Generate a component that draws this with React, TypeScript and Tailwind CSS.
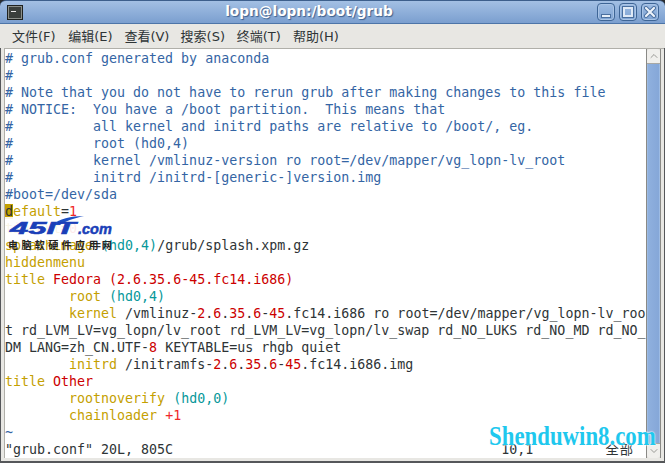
import { ChevronDown, ChevronUp } from "lucide-react";

const Y = "text-[#c4a000]";
const R = "text-[#cc0000]";
const L = "text-[#ef2929]";
const C = "text-[#06989a]";
const B = "text-[#3465a4]";
const K = "text-[#2e3436]";

type Seg = [string, string];

const rows: Seg[][] = [
  [[B, "# grub.conf generated by anaconda"]],
  [[B, "#"]],
  [[B, "# Note that you do not have to rerun grub after making changes to this file"]],
  [[B, "# NOTICE:  You have a /boot partition.  This means that"]],
  [[B, "#          all kernel and initrd paths are relative to /boot/, eg."]],
  [[B, "#          root (hd0,4)"]],
  [[B, "#          kernel /vmlinuz-version ro root=/dev/mapper/vg_lopn-lv_root"]],
  [[B, "#          initrd /initrd-[generic-]version.img"]],
  [[B, "#boot=/dev/sda"]],
  [[Y, "default"], [K, "="], [L, "1"]],
  [[Y, "timeout"], [K, "="], [L, "0"]],
  [[Y, "splashimage"], [K, "="], [C, "(hd0,4)"], [K, "/grub/splash.xpm.gz"]],
  [[Y, "hiddenmenu"]],
  [[Y, "title "], [R, "Fedora (2.6.35.6-45.fc14.i686)"]],
  [[K, "        "], [Y, "root "], [C, "(hd0,4)"]],
  [
    [K, "        "],
    [Y, "kernel "],
    [K, "/vmlinuz-"],
    [R, "2"],
    [K, "."],
    [R, "6"],
    [K, "."],
    [R, "35"],
    [K, "."],
    [R, "6"],
    [K, "-"],
    [R, "45"],
    [K, ".fc14.i686 ro root=/dev/mapper/vg_lopn-lv_roo"],
  ],
  [[K, "t rd_LVM_LV=vg_lopn/lv_root rd_LVM_LV=vg_lopn/lv_swap rd_NO_LUKS rd_NO_MD rd_NO_"]],
  [[K, "DM LANG=zh_CN.UTF-"], [R, "8"], [K, " KEYTABLE=us rhgb quiet"]],
  [
    [K, "        "],
    [Y, "initrd "],
    [K, "/initramfs-"],
    [R, "2"],
    [K, "."],
    [R, "6"],
    [K, "."],
    [R, "35"],
    [K, "."],
    [R, "6"],
    [K, "-"],
    [R, "45"],
    [K, ".fc14.i686.img"],
  ],
  [[Y, "title "], [R, "Other"]],
  [[K, "        "], [Y, "rootnoverify "], [C, "(hd0,0)"]],
  [[K, "        "], [Y, "chainloader "], [L, "+1"]],
  [[B, "~"]],
];

const menus = ["文件(F)", "编辑(E)", "查看(V)", "搜索(S)", "终端(T)", "帮助(H)"];

function WinButton({ children }: { children: React.ReactNode }) {
  return (
    <div className="w-[18px] h-[18px] rounded-[4px] border border-[#3e6596] bg-gradient-to-b from-[#9dbbe2] to-[#7fa3d3] flex items-center justify-center shadow-[inset_0_0_0_1px_#a9c4e6]">
      {children}
    </div>
  );
}

export default function App() {
  return (
    <div className="w-[665px] h-[463px] overflow-hidden relative bg-[#2a2d30] flex flex-col font-['DejaVu_Sans','Noto_Sans_CJK_SC',sans-serif]">
      {/* Title bar */}
      <div className="h-[24px] shrink-0 flex items-center pl-[7px] pr-[6px] rounded-t-[6px] border-t border-[#3d5f8c] border-b border-b-[#4d75a8] bg-gradient-to-b from-[#a3c0e4] to-[#7b9fcf]">
        <div className="w-[16px] h-[15px] bg-[#3a3f3c] border border-[#1f2220] shadow-[inset_0_0_0_1px_#8b8f8a] flex items-start p-[3px]">
          <span className="block w-[5px] h-[3px] border-b border-[#e8e8e8]" />
        </div>
        <div className="flex-1 text-center text-white font-bold text-[13.7px] leading-none [text-shadow:1px_1px_1px_#3d5f8c] pr-[2px]">
          lopn@lopn:/boot/grub
        </div>
        <div className="flex gap-[4px]">
          <WinButton>
            <span className="block w-[10px] h-[4px] bg-[#e6eef8] border border-[#4a6f9f] mt-[8px]" />
          </WinButton>
          <WinButton>
            <span className="block w-[10px] h-[10px] border-2 border-[#dfe9f6] outline outline-1 outline-[#4a6f9f]" />
          </WinButton>
          <WinButton>
            <svg width="12" height="12" viewBox="0 0 12 12">
              <path d="M2 2 L10 10 M10 2 L2 10" stroke="#4a6f9f" strokeWidth="4" strokeLinecap="round" />
              <path d="M2 2 L10 10 M10 2 L2 10" stroke="#eef3fa" strokeWidth="2.2" strokeLinecap="round" />
            </svg>
          </WinButton>
        </div>
      </div>

      {/* Menu bar */}
      <div className="h-[24px] shrink-0 flex items-center pl-[12px] gap-[14px] text-[13px] leading-none text-[#2e3436] bg-[#e8e7e3]">
        {menus.map((m) => (
          <span key={m} className="w-[42.2px] whitespace-nowrap">
            {m}
          </span>
        ))}
      </div>

      {/* Terminal area */}
      <div className="flex-1 min-h-0 flex pl-[3px] pb-[3px] bg-[#e8e7e3] border-x border-b-2 border-[#55575a] border-t-0">
        <div className="flex-1 min-w-0 flex border-t border-l border-[#b0afa9] bg-white">
          <div className="relative flex-1 min-w-0 pt-[1px] overflow-hidden font-['DejaVu_Sans_Mono','Noto_Sans_CJK_SC',monospace] text-[13.3px] leading-[17px]">
            {rows.map((row, i) => (
              <div key={i} className="h-[17px] whitespace-pre">
                {i === 9 ? <span className="bg-[#c4a000] text-[#2e3436]">d</span> : null}
                {row.map(([cls, text], j) => (
                  <span key={j} className={cls}>
                    {i === 9 && j === 0 ? text.slice(1) : text}
                  </span>
                ))}
              </div>
            ))}
            <div className="h-[17px] whitespace-pre text-[#2e3436]">
              {'"grub.conf" 20L, 805C'}
              <span>{"                                         10,1"}</span>
              <span className="tracking-[1px]">{"        全部"}</span>
            </div>

            {/* 45IT logo */}
            <div className="absolute left-[0px] top-[168px] w-[113px] h-[23px] bg-white/90">
              <svg className="absolute left-[46px] top-[-2px]" width="34" height="11" viewBox="0 0 34 11">
                <path d="M1 10 C8 4 20 1 33 1 C24 3 14 6 9 10 Z" fill="#1d4fc4" />
              </svg>
              <div className="absolute left-[5px] top-[4px] whitespace-nowrap font-['Liberation_Sans',sans-serif] italic font-bold leading-none text-[#1a3fb8] [-webkit-text-stroke:0.5px_#1a3fb8]">
                <span className="inline-block w-[68px] text-[16px] origin-left scale-x-[2.05]">45IT</span>
                <span className="text-[14.5px]">.com</span>
              </div>
              <div className="absolute left-[3px] top-[22px] whitespace-nowrap font-['Noto_Sans_CJK_SC',sans-serif] font-bold text-[10px] leading-[11px] tracking-[3.4px] text-[#222]">
                电脑软硬件应用网
              </div>
            </div>
          </div>

          {/* Scrollbar */}
          <div className="w-[15px] shrink-0 flex flex-col bg-[#e0dfdb] border-x border-[#8a8a86]">
            <div className="h-[15px] shrink-0 bg-[#f0efec] border-b border-[#a8a8a4] rounded-t-[3px] flex items-center justify-center text-[#9a9a96]">
              <ChevronUp size={12} strokeWidth={2} />
            </div>
            <div className="flex-1 bg-gradient-to-r from-[#8fb0de] to-[#85a7d8] border-x border-[#9dbbe3]" />
            <div className="h-[15px] shrink-0 bg-[#f0efec] border-t border-[#a8a8a4] rounded-b-[3px] flex items-center justify-center text-[#9a9a96]">
              <ChevronDown size={12} strokeWidth={2} />
            </div>
          </div>
          <div className="w-[3px] shrink-0 bg-[#e8e7e3]" />
        </div>
      </div>

      {/* Shenduwin8 watermark */}
      <div className="absolute left-[489px] top-[421px] origin-left scale-x-[0.845] whitespace-nowrap font-['Liberation_Serif',serif] font-bold text-[27px] leading-[30px] text-[#1fc8ee] [text-shadow:0_0_2px_#fff,0_0_2px_#fff]">
        Shenduwin8.com
      </div>
    </div>
  );
}
